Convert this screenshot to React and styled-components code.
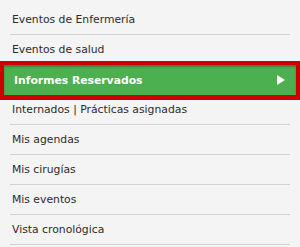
import React from 'react';
import styled, { createGlobalStyle } from 'styled-components';

const GlobalStyle = createGlobalStyle`
  html, body {
    margin: 0;
    padding: 0;
    background: #f4f4f4;
  }
`;

const Menu = styled.ul`
  list-style: none;
  margin: 0;
  padding: 5px 10px 0;
  width: 300px;
  height: 247px;
  box-sizing: border-box;
  background: #f4f4f4;
  font-family: 'DejaVu Sans', Verdana, sans-serif;
  font-size: 10.8px;
  color: #2b2b2b;
  overflow: hidden;
`;

const Item = styled.li`
  display: flex;
  align-items: center;
  justify-content: space-between;
  height: 29px;
  padding: 0 2px;
  border-bottom: 1px solid #d2d2d2;
  white-space: nowrap;
`;

const ActiveItem = styled.li`
  display: flex;
  align-items: center;
  justify-content: space-between;
  height: 30px;
  margin: 0 -6px;
  padding: 0 11px 0 10px;
  background: #4caf50;
  color: #fff;
  font-weight: bold;
  outline: 4px solid #cc0000;
  box-shadow: inset 0 2px 2px rgba(0, 0, 0, 0.25), 0 1px 0 4px #cc0000;
  white-space: nowrap;
`;

const Arrow = styled.span`
  width: 0;
  height: 0;
  border-top: 5px solid transparent;
  border-bottom: 5px solid transparent;
  border-left: 8px solid #fff;
`;

const items = [
  'Eventos de Enfermería',
  'Eventos de salud',
  'Informes Reservados',
  'Internados | Prácticas asignadas',
  'Mis agendas',
  'Mis cirugías',
  'Mis eventos',
  'Vista cronológica',
];

export default function App() {
  return (
    <>
      <GlobalStyle />
      <Menu>
        {items.map((label) =>
          label === 'Informes Reservados' ? (
            <ActiveItem key={label}>
              <span>{label}</span>
              <Arrow />
            </ActiveItem>
          ) : (
            <Item key={label}>{label}</Item>
          )
        )}
      </Menu>
    </>
  );
}
